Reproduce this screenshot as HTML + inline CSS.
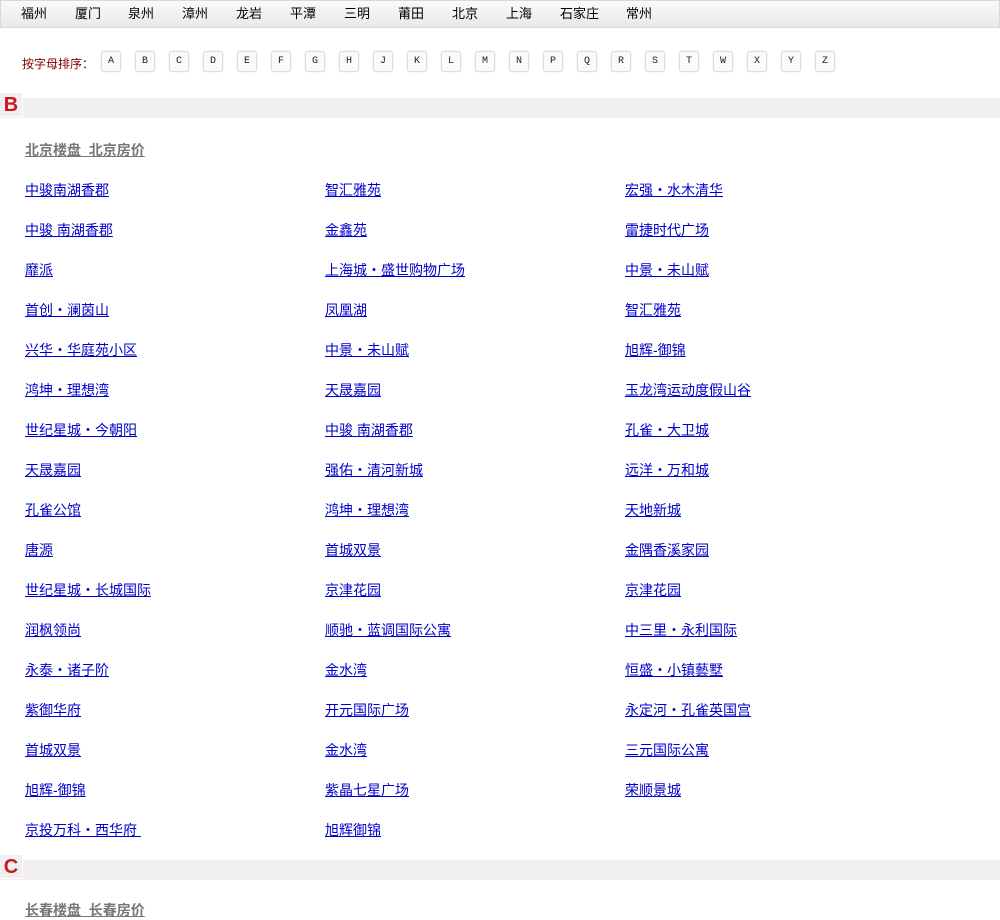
<!DOCTYPE html>
<html><head><meta charset="utf-8"><style>
*{margin:0;padding:0;box-sizing:border-box}
body{width:1000px;height:909px;overflow:hidden;background:#fff;font-family:"Liberation Sans","WenQuanYi Zen Hei","Noto Sans CJK SC",sans-serif;position:relative}
.nav{position:absolute;left:0;top:0;width:1000px;height:28px;border:1px solid #d8d8d8;background:linear-gradient(#fafafa,#e9e9e9);}
.nav span{position:absolute;top:6px;font-size:13px;color:#000;line-height:14px}
.sort{position:absolute;left:22px;top:55px;font-size:12px;color:#800000}
.btn{position:absolute;top:51px;width:20px;height:21px;border:1px solid #ddd;border-radius:3px;background:#fafafa;font-family:"Liberation Mono",monospace;font-size:10px;text-align:center;line-height:19px;color:#222;box-shadow:0 0 1px #ccc}
.bar{position:absolute;left:0;width:1000px;height:20px;background:#f0eeef}
.let{position:absolute;left:0;width:23px;height:24px;background:#f0eeef;border-right:1px solid #fff;border-bottom:1px solid #fff;color:#c8191e;font:bold 20px "Liberation Sans",sans-serif;text-align:center;line-height:24px}
.h{position:absolute;left:25px;font-size:14px;font-weight:bold;color:#777;text-decoration:underline}
a{position:absolute;font-size:14px;color:#00c;text-decoration:underline;line-height:16px;white-space:pre;margin-top:1px}
</style></head><body>
<div class="nav">
<span style="left:20px">福州</span><span style="left:74px">厦门</span><span style="left:127px">泉州</span><span style="left:181px">漳州</span><span style="left:235px">龙岩</span><span style="left:289px">平潭</span><span style="left:343px">三明</span><span style="left:397px">莆田</span><span style="left:451px">北京</span><span style="left:505px">上海</span><span style="left:559px">石家庄</span><span style="left:625px">常州</span>
</div>
<div class="sort">按字母排序：</div>
<div class="btn" style="left:101px">A</div><div class="btn" style="left:135px">B</div><div class="btn" style="left:169px">C</div><div class="btn" style="left:203px">D</div><div class="btn" style="left:237px">E</div><div class="btn" style="left:271px">F</div><div class="btn" style="left:305px">G</div><div class="btn" style="left:339px">H</div><div class="btn" style="left:373px">J</div><div class="btn" style="left:407px">K</div><div class="btn" style="left:441px">L</div><div class="btn" style="left:475px">M</div><div class="btn" style="left:509px">N</div><div class="btn" style="left:543px">P</div><div class="btn" style="left:577px">Q</div><div class="btn" style="left:611px">R</div><div class="btn" style="left:645px">S</div><div class="btn" style="left:679px">T</div><div class="btn" style="left:713px">W</div><div class="btn" style="left:747px">X</div><div class="btn" style="left:781px">Y</div><div class="btn" style="left:815px">Z</div>
<div class="bar" style="top:98px"></div><div class="let" style="top:93px">B</div>
<div class="h" style="top:140px">北京楼盘&nbsp;&nbsp;北京房价</div>
<a style="left:25px;top:181px">中骏南湖香郡</a><a style="left:325px;top:181px">智汇雅苑</a><a style="left:625px;top:181px">宏强・水木清华</a>
<a style="left:25px;top:221px">中骏 南湖香郡</a><a style="left:325px;top:221px">金鑫苑</a><a style="left:625px;top:221px">雷捷时代广场</a>
<a style="left:25px;top:261px">靡派</a><a style="left:325px;top:261px">上海城・盛世购物广场</a><a style="left:625px;top:261px">中景・未山赋</a>
<a style="left:25px;top:301px">首创・澜茵山</a><a style="left:325px;top:301px">凤凰湖</a><a style="left:625px;top:301px">智汇雅苑</a>
<a style="left:25px;top:341px">兴华・华庭苑小区</a><a style="left:325px;top:341px">中景・未山赋</a><a style="left:625px;top:341px">旭辉-御锦</a>
<a style="left:25px;top:381px">鸿坤・理想湾</a><a style="left:325px;top:381px">天晟嘉园</a><a style="left:625px;top:381px">玉龙湾运动度假山谷</a>
<a style="left:25px;top:421px">世纪星城・今朝阳</a><a style="left:325px;top:421px">中骏 南湖香郡</a><a style="left:625px;top:421px">孔雀・大卫城</a>
<a style="left:25px;top:461px">天晟嘉园</a><a style="left:325px;top:461px">强佑・清河新城</a><a style="left:625px;top:461px">远洋・万和城</a>
<a style="left:25px;top:501px">孔雀公馆</a><a style="left:325px;top:501px">鸿坤・理想湾</a><a style="left:625px;top:501px">天地新城</a>
<a style="left:25px;top:541px">唐源</a><a style="left:325px;top:541px">首城双景</a><a style="left:625px;top:541px">金隅香溪家园</a>
<a style="left:25px;top:581px">世纪星城・长城国际</a><a style="left:325px;top:581px">京津花园</a><a style="left:625px;top:581px">京津花园</a>
<a style="left:25px;top:621px">润枫领尚</a><a style="left:325px;top:621px">顺驰・蓝调国际公寓</a><a style="left:625px;top:621px">中三里・永利国际</a>
<a style="left:25px;top:661px">永泰・诸子阶</a><a style="left:325px;top:661px">金水湾</a><a style="left:625px;top:661px">恒盛・小镇藝墅</a>
<a style="left:25px;top:701px">紫御华府</a><a style="left:325px;top:701px">开元国际广场</a><a style="left:625px;top:701px">永定河・孔雀英国宫</a>
<a style="left:25px;top:741px">首城双景</a><a style="left:325px;top:741px">金水湾</a><a style="left:625px;top:741px">三元国际公寓</a>
<a style="left:25px;top:781px">旭辉-御锦</a><a style="left:325px;top:781px">紫晶七星广场</a><a style="left:625px;top:781px">荣顺景城</a>
<a style="left:25px;top:821px">京投万科・西华府 </a><a style="left:325px;top:821px">旭辉御锦</a>
<div class="bar" style="top:860px"></div><div class="let" style="top:855px">C</div>
<div class="h" style="top:900px">长春楼盘&nbsp;&nbsp;长春房价</div>
</body></html>
